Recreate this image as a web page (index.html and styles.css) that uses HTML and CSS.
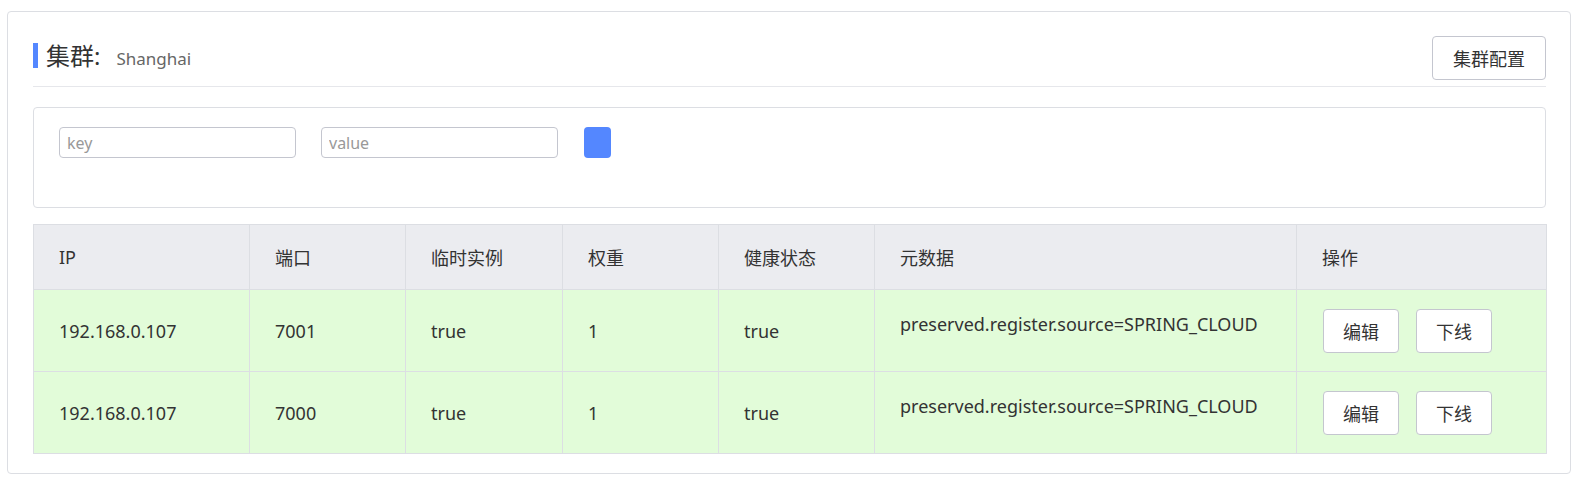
FILE: index.html
```html
<!DOCTYPE html>
<html lang="zh-CN">
<head>
<meta charset="utf-8">
<title>集群</title>
<link rel="stylesheet" href="styles.css">
</head>
<body>
<div class="page">
  <div class="card">
    <div class="card-head">
      <h1 class="title">集群:<span class="cluster-name">Shanghai</span></h1>
      <button class="btn btn-config">集群配置</button>
    </div>
    <div class="divider"></div>
    <div class="filter">
      <div class="filter-row">
        <input class="input" type="text" placeholder="key">
        <input class="input" type="text" placeholder="value">
        <button class="btn-add" aria-label="添加"></button>
      </div>
    </div>
    <table class="table">
      <colgroup>
        <col class="c-ip"><col class="c-port"><col class="c-eph"><col class="c-weight"><col class="c-health"><col class="c-meta"><col class="c-ops">
      </colgroup>
      <thead>
        <tr><th>IP</th><th>端口</th><th>临时实例</th><th>权重</th><th>健康状态</th><th>元数据</th><th>操作</th></tr>
      </thead>
      <tbody>
        <tr>
          <td>192.168.0.107</td><td>7001</td><td>true</td><td>1</td><td>true</td>
          <td><div class="meta">preserved.register.source=SPRING_CLOUD</div></td>
          <td><div class="ops"><button class="btn btn-op">编辑</button><button class="btn btn-op">下线</button></div></td>
        </tr>
        <tr>
          <td>192.168.0.107</td><td>7000</td><td>true</td><td>1</td><td>true</td>
          <td><div class="meta">preserved.register.source=SPRING_CLOUD</div></td>
          <td><div class="ops"><button class="btn btn-op">编辑</button><button class="btn btn-op">下线</button></div></td>
        </tr>
      </tbody>
    </table>
  </div>
</div>
</body>
</html>
```

FILE: styles.css
```css
* { box-sizing: border-box; }
html, body { margin: 0; padding: 0; background: #fff; }
body {
  font-family: "Noto Sans", "Noto Sans CJK SC", sans-serif;
  color: #333;
  font-size: 18px;
}
.page { padding: 11px 12px 11px 7px; }
.card {
  border: 1px solid #dcdee3;
  border-radius: 4px;
  padding: 24px 24px 19px 25px;
}
.card-head {
  display: flex;
  justify-content: space-between;
  align-items: flex-start;
}
.title {
  margin: 7px 0 0 0;
  border-left: 5px solid #5487ff;
  padding-left: 8px;
  font-size: 24px;
  font-weight: normal;
  line-height: 25px;
  height: 25px;
  color: #333;
  display: flex;
  align-items: baseline;
}
.cluster-name {
  font-size: 17px;
  color: #666;
  margin-left: 16px;
}
.btn {
  font-family: inherit;
  background: #fff;
  border: 1px solid #c4c6cf;
  border-radius: 4px;
  color: #333;
  cursor: pointer;
  padding: 0;
}
.btn-config {
  width: 114px;
  height: 44px;
  font-size: 18px;
}
.divider {
  height: 1px;
  background: #e6e7eb;
  margin-top: 6px;
}
.filter {
  margin-top: 20px;
  border: 1px solid #dcdee3;
  border-radius: 4px;
  padding: 19px 25px 49px 25px;
}
.filter-row {
  display: flex;
  align-items: center;
  gap: 25px;
}
.input {
  width: 237px;
  height: 31px;
  border: 1px solid #c4c6cf;
  border-radius: 4px;
  padding: 0 7px;
  font-family: inherit;
  font-size: 16px;
  color: #333;
  outline: none;
}
.input::placeholder { color: #999; }
.btn-add {
  width: 27px;
  height: 31px;
  border: none;
  border-radius: 4px;
  background: #5487ff;
  margin-left: 1px;
  padding: 0;
}
.table {
  margin-top: 16px;
  width: 100%;
  border-collapse: collapse;
  table-layout: fixed;
}
.c-ip { width: 216px; }
.c-port { width: 156px; }
.c-eph { width: 157px; }
.c-weight { width: 156px; }
.c-health { width: 156px; }
.c-meta { width: 422px; }
.c-ops { width: 250px; }
.table th, .table td {
  border: 1px solid #dcdee3;
  text-align: left;
  font-weight: normal;
  padding: 0 0 0 25px;
  font-size: 18px;
  color: #333;
}
.table th {
  background: #ebecf0;
  height: 65px;
}
.table td {
  background: #e2fcd9;
  height: 82px;
}
.meta { padding-bottom: 14px; }
.ops { display: flex; gap: 17px; padding-left: 1px; }
.btn-op {
  width: 76px;
  height: 44px;
  font-size: 18px;
}
```
